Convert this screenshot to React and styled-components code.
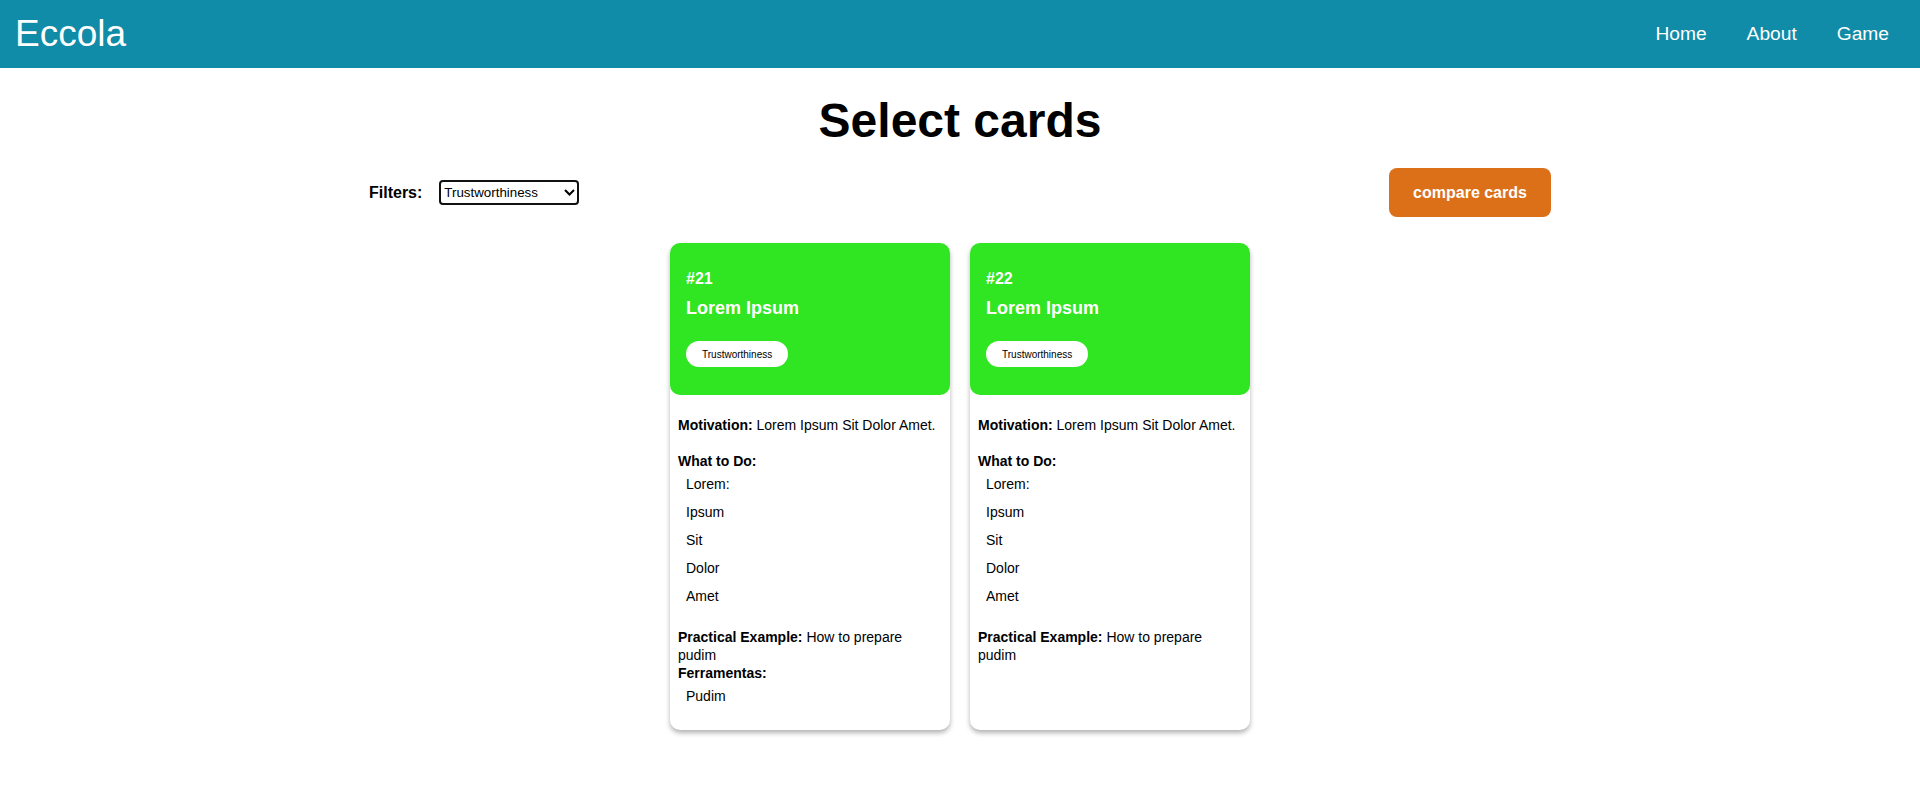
import React, { useState } from "react";
import styled, { createGlobalStyle } from "styled-components";

const GlobalStyle = createGlobalStyle`
  body {
    margin: 0;
    background: #fff;
    font-family: "Liberation Sans", Arial, sans-serif;
    color: #000;
  }
`;

const Header = styled.header`
  height: 68px;
  background: #108ba8;
  display: flex;
  justify-content: space-between;
  align-items: center;
  padding: 0 31px 0 15px;
`;

const Logo = styled.a`
  color: #fff;
  font-size: 37px;
  text-decoration: none;
`;

const Nav = styled.nav`
  display: flex;
  gap: 40px;
`;

const NavLink = styled.a`
  color: #fff;
  font-size: 19.2px;
  text-decoration: none;
  cursor: pointer;
`;

const Title = styled.h1`
  margin: 25px 0 20px;
  text-align: center;
  font-size: 48px;
  font-weight: bold;
`;

const Toolbar = styled.div`
  width: 1182px;
  margin: 0 auto;
  display: flex;
  justify-content: space-between;
  align-items: center;
`;

const FilterGroup = styled.div`
  display: flex;
  align-items: center;
  gap: 17px;
`;

const FilterLabel = styled.label`
  font-size: 16px;
  font-weight: bold;
`;

const SelectWrap = styled.div`
  position: relative;
  display: flex;
`;

const Select = styled.select`
  appearance: none;
  width: 140px;
  height: 25px;
  box-sizing: border-box;
  border: 2px solid #111;
  border-radius: 4px;
  background: #fff;
  padding: 0 0 0 3px;
  font-family: "Liberation Sans", Arial, sans-serif;
  font-size: 13.33px;
  color: #000;
  outline: none;
`;

const Chevron = styled.svg`
  position: absolute;
  right: 4px;
  top: 9px;
  pointer-events: none;
`;

const CompareButton = styled.button`
  width: 162px;
  height: 49px;
  border: none;
  border-radius: 8px;
  background: #dc7018;
  color: #fff;
  font-family: "Liberation Sans", Arial, sans-serif;
  font-size: 16px;
  font-weight: bold;
  cursor: pointer;
`;

const CardRow = styled.div`
  display: flex;
  justify-content: center;
  gap: 20px;
  margin-top: 26px;
  padding-bottom: 40px;
`;

const Card = styled.div`
  width: 280px;
  background: #fff;
  border-radius: 10px;
  box-shadow: 0 3px 5px rgba(0, 0, 0, 0.3);
  display: flex;
  flex-direction: column;
`;

const CardTop = styled.div`
  height: 152px;
  box-sizing: border-box;
  background: #30e521;
  border-radius: 10px;
  padding: 27px 16px 0;
  color: #fff;
`;

const CardNumber = styled.div`
  font-size: 16px;
  font-weight: bold;
`;

const CardTitle = styled.h3`
  margin: 10px 0 22px;
  font-size: 18px;
  font-weight: bold;
`;

const Tag = styled.span`
  display: inline-flex;
  align-items: center;
  height: 26px;
  padding: 0 16px;
  border-radius: 13px;
  background: #fff;
  color: #000;
  font-size: 10px;
`;

const CardBody = styled.div`
  padding: 21px 8px 20px;
  font-size: 14px;
  line-height: 18px;
  color: #000;
`;

const Para = styled.p`
  margin: 0 0 ${({ gap }) => gap || 0}px;
`;

const List = styled.ul`
  list-style: none;
  margin: 0 0 ${({ gap }) => gap || 0}px;
  padding: 0 0 0 8px;
`;

const Item = styled.li`
  padding: 5px 0;
`;

const cards = [
  { id: 21, tools: ["Pudim"] },
  { id: 22, tools: null },
];

const steps = ["Lorem:", "Ipsum", "Sit", "Dolor", "Amet"];

function CardView({ card }) {
  return (
    <Card>
      <CardTop>
        <CardNumber>#{card.id}</CardNumber>
        <CardTitle>Lorem Ipsum</CardTitle>
        <Tag>Trustworthiness</Tag>
      </CardTop>
      <CardBody>
        <Para gap={18}>
          <b>Motivation:</b> Lorem Ipsum Sit Dolor Amet.
        </Para>
        <Para>
          <b>What to Do:</b>
        </Para>
        <List gap={18}>
          {steps.map(s => (
            <Item key={s}>{s}</Item>
          ))}
        </List>
        <Para>
          <b>Practical Example:</b> How to prepare pudim
        </Para>
        {card.tools && (
          <>
            <Para>
              <b>Ferramentas:</b>
            </Para>
            <List>
              {card.tools.map(t => (
                <Item key={t}>{t}</Item>
              ))}
            </List>
          </>
        )}
      </CardBody>
    </Card>
  );
}

export default function App() {
  const [filter, setFilter] = useState("Trustworthiness");

  return (
    <>
      <GlobalStyle />
      <Header>
        <Logo>Eccola</Logo>
        <Nav>
          <NavLink>Home</NavLink>
          <NavLink>About</NavLink>
          <NavLink>Game</NavLink>
        </Nav>
      </Header>
      <Title>Select cards</Title>
      <Toolbar>
        <FilterGroup>
          <FilterLabel>Filters:</FilterLabel>
          <SelectWrap>
            <Select value={filter} onChange={e => setFilter(e.target.value)}>
              <option>Trustworthiness</option>
              <option>Transparency</option>
              <option>Accountability</option>
            </Select>
            <Chevron width="11" height="7" viewBox="0 0 11 7">
              <path
                d="M1 1 L5.5 5.5 L10 1"
                fill="none"
                stroke="#000"
                strokeWidth="2"
              />
            </Chevron>
          </SelectWrap>
        </FilterGroup>
        <CompareButton>compare cards</CompareButton>
      </Toolbar>
      <CardRow>
        {cards.map(c => (
          <CardView key={c.id} card={c} />
        ))}
      </CardRow>
    </>
  );
}
